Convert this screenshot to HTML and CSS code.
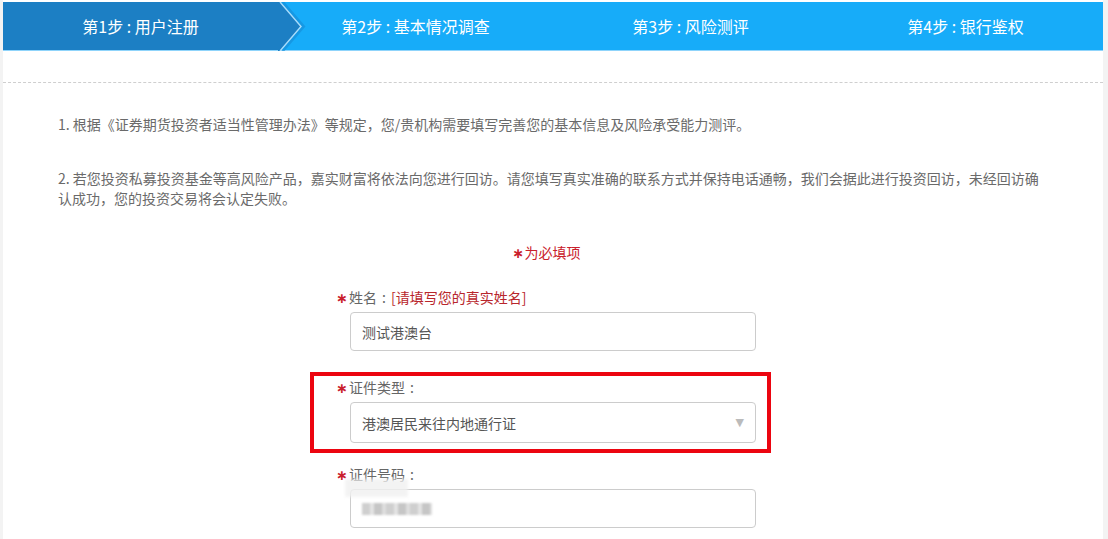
FILE: index.html
```html
<!DOCTYPE html>
<html>
<head>
	<meta charset="utf-8">
	<meta name="viewport" content="width=device-width, initial-scale=1.0">
	<link rel="stylesheet" href="styles.css">
	<title>基本信息</title>
</head>
<body>
	<div class="page">
		<div class="steps">
			<div class="step step-done">
				第1步 : 用户注册
				<svg class="step-arrow" width="30" height="49" viewBox="0 0 30 49">
					<polygon points="0,0 2,0 23,24.5 2,49 0,49" fill="#1c7fc4"/>
					<polyline points="4.5,0 25.5,24.5 4.5,49" fill="none" stroke="#1590dc" stroke-width="3" opacity="0.7"/>
					<polyline points="2,0 23,24.5 2,49" fill="none" stroke="#a9dcfb" stroke-width="1.4"/>
				</svg>
			</div>
			<div class="step">第2步 : 基本情况调查</div>
			<div class="step">第3步 : 风险测评</div>
			<div class="step">第4步 : 银行鉴权</div>
		</div>
		<div class="divider"></div>

		<div class="content">
			<p class="notice">1. 根据《证券期货投资者适当性管理办法》等规定，您/贵机构需要填写完善您的基本信息及风险承受能力测评。</p>
			<p class="notice">2. 若您投资私募投资基金等高风险产品，嘉实财富将依法向您进行回访。请您填写真实准确的联系方式并保持电话通畅，我们会据此进行投资回访，未经回访确认成功，您的投资交易将会认定失败。</p>

			<div class="form">
				<div class="required-tip"><span class="star">∗</span>为必填项</div>

				<div class="form-group">
					<label class="form-label"><span class="star">∗</span>姓名<span class="colon">:</span><span class="hint">[请填写您的真实姓名]</span></label>
					<input class="form-control" type="text" value="测试港澳台">
				</div>

				<div class="form-group form-group-marked">
					<label class="form-label"><span class="star">∗</span>证件类型<span class="colon">:</span></label>
					<div class="form-control form-select">
						<span>港澳居民来往内地通行证</span>
						<span class="select-arrow">▼</span>
					</div>
				</div>

				<div class="form-group">
					<label class="form-label"><span class="star">∗</span>证件号码<span class="colon">:</span></label>
					<div class="form-control">
						<span class="blurred-value"></span>
					</div>
					<div class="blurred-patch"></div>
				</div>
			</div>
		</div>
	</div>
</body>
</html>
```

FILE: styles.css
```css
	body {
		margin: 0;
		background-color: #f3f3f3;
		font-family: "Noto Sans CJK SC", "Noto Sans", sans-serif;
		font-size: 14px;
		color: #6a6a6a;
		overflow: hidden;
	}

	.page {
		width: 1100px;
		margin-left: 3px;
		padding-top: 2px;
		min-height: 537px;
		background-color: white;
	}

	/* steps bar */
	.steps {
		display: flex;
		height: 48px;
		background-color: #17acf9;
		border-bottom: 1px solid #8fd4fb;
	}
	.step {
		flex: 1;
		position: relative;
		color: white;
		font-size: 16px;
		line-height: 48px;
		text-align: center;
	}
	.step-done {
		background-color: #1c7fc4;
	}
	.step-arrow {
		position: absolute;
		top: 0;
		left: 100%;
		z-index: 1;
	}

	.divider {
		height: 31px;
		border-bottom: 1px dashed #cfcfcf;
	}

	.content {
		padding: 31px 55px 0 55px;
	}
	.notice {
		margin: 0 0 34px 0;
		line-height: 20px;
	}

	/* form */
	.form {
		width: 420px;
		margin-left: 278px;
	}
	.star {
		display: inline-block;
		width: 13px;
		line-height: 1;
		color: #c9202b;
		font-family: "DejaVu Sans", sans-serif;
		font-weight: bold;
		font-size: 14px;
	}
	.colon {
		display: inline-block;
		width: 14px;
		text-align: center;
	}
	.required-tip {
		height: 20px;
		line-height: 20px;
		color: #c9202b;
		text-align: center;
		margin-bottom: 25px;
	}
	.form-group {
		position: relative;
		margin-bottom: 26px;
	}
	.form-group-marked {
		margin-bottom: 21px;
	}
	.form-group-marked::after {
		content: "";
		position: absolute;
		top: -5px;
		bottom: -10px;
		left: -26px;
		right: -15px;
		border: 4px solid #ec0510;
	}
	.form-label {
		display: block;
		height: 20px;
		line-height: 20px;
		margin-bottom: 5px;
		color: #666;
	}
	.hint {
		color: #b8262c;
	}
	.form-control {
		display: block;
		box-sizing: border-box;
		width: 406px;
		height: 39px;
		margin-left: 14px;
		padding: 0 11px;
		border: 1px solid #ccc;
		border-radius: 4px;
		background: white;
		font-family: inherit;
		font-size: 14px;
		color: #555;
		outline: none;
	}
	.form-select {
		display: flex;
		align-items: center;
		justify-content: space-between;
		height: 41px;
		padding-right: 11px;
	}
	.select-arrow {
		color: #bbb;
		font-size: 11px;
		font-family: "DejaVu Sans", sans-serif;
	}

	/* masked id number */
	.blurred-value {
		display: block;
		width: 70px;
		height: 12px;
		margin-top: 13px;
		background: repeating-linear-gradient(90deg, #cfcfcf 0 8px, #e4e4e4 8px 12px, #c6c6c6 12px 20px, #dedede 20px 24px);
		filter: blur(1.2px);
	}
	.blurred-patch {
		position: absolute;
		top: 15px;
		left: 9px;
		width: 63px;
		height: 18px;
		background-color: #f1f1f1;
		filter: blur(1.5px);
		opacity: 0.8;
	}
```
